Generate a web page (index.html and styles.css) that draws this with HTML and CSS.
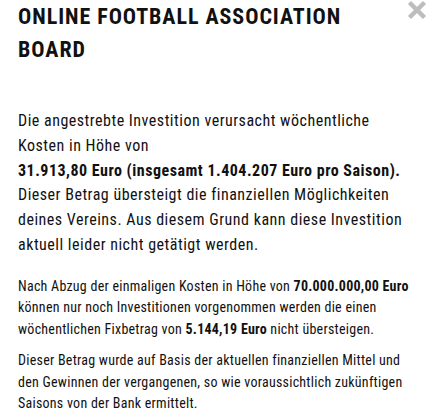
FILE: index.html
```html
<!doctype html>
<html lang="de">
    <head>
        <meta charset="utf-8">
        <meta name="viewport" content="width=device-width, initial-scale=1.0"/>
        <title>Online Football Association Board</title>
        <link rel="stylesheet" href="styles.css">
    </head>
    <body>
        <div class="modal">
            <button class="close" aria-label="Schließen">
                <svg viewBox="0 0 20 20" width="20" height="20">
                    <path d="M2.5 2.5 L17.5 17.5 M17.5 2.5 L2.5 17.5"/>
                </svg>
            </button>
            <header>ONLINE FOOTBALL ASSOCIATION BOARD</header>
            <div class="content">
                <p class="lead">
                    Die angestrebte Investition verursacht wöchentliche Kosten in Höhe von<br>
                    <b>31.913,80 Euro (insgesamt 1.404.207 Euro pro Saison).</b><br>
                    Dieser Betrag übersteigt die finanziellen Möglichkeiten deines Vereins. Aus diesem Grund kann diese Investition aktuell leider nicht getätigt werden.
                </p>
                <p class="note">
                    Nach Abzug der einmaligen Kosten in Höhe von <b>70.000.000,00 Euro</b> können nur noch Investitionen vorgenommen werden die einen wöchentlichen Fixbetrag von <b>5.144,19 Euro</b> nicht übersteigen.
                </p>
                <p class="note">
                    Dieser Betrag wurde auf Basis der aktuellen finanziellen Mittel und den Gewinnen der vergangenen, so wie voraussichtlich zukünftigen Saisons von der Bank ermittelt.
                </p>
            </div>
        </div>
    </body>
</html>
```

FILE: styles.css
```css
/*----- Reset -----*/

*{
	box-sizing: border-box;
}

html, body{
	padding: 0;
	margin: 0;
	background: #fff;
	color: #111;
	font-family: "Roboto Condensed", Roboto, sans-serif;
	line-height: 1.55;
}

/*----- modal -----*/

.modal{
	position: relative;
	padding: 0 18px;
}

.modal header{
	font-size: 22px;
	line-height: 33px;
	letter-spacing: 0.95px;
	font-weight: bold;
	padding-right: 60px;
}

.modal .close{
	position: absolute;
	top: 0;
	right: 9px;
	padding: 0;
	border: 0;
	background: none;
}

.close svg{
	display: block;
}

.close svg path{
	stroke: #bdbdbd;
	stroke-width: 4.5;
	fill: none;
}

.content p{
	margin: 0;
}

.content .lead{
	margin-top: 43px;
	font-size: 16px;
	letter-spacing: 0.5px;
}

.content .note{
	margin-top: 9px;
	font-size: 14px;
	letter-spacing: 0.25px;
}

.content .lead + .note{
	margin-top: 18px;
}
```
